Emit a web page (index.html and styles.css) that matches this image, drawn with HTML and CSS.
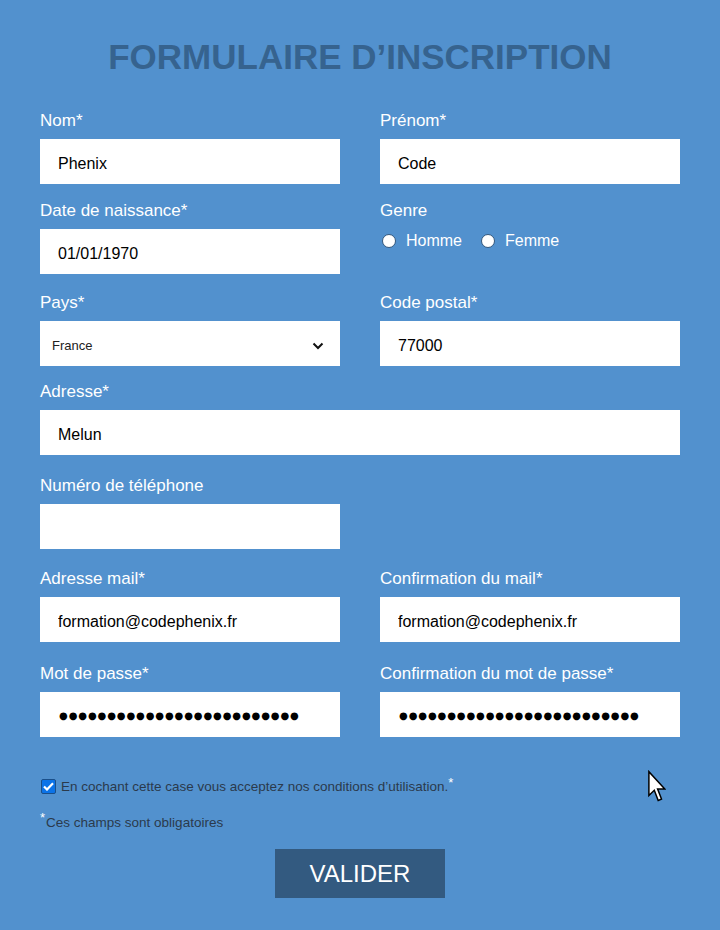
FILE: index.html
```html
<!DOCTYPE html>
<html lang="fr">
<head>
<meta charset="utf-8">
<title>Formulaire d'inscription</title>
<link rel="stylesheet" href="styles.css">
</head>
<body>
<main class="page">
  <h1 class="title">FORMULAIRE D’INSCRIPTION</h1>
  <form class="form">
    <div class="row">
      <div class="field"><label class="label">Nom*</label><input class="input" type="text" value="Phenix"></div>
      <div class="field"><label class="label">Prénom*</label><input class="input" type="text" value="Code"></div>
    </div>
    <div class="row row--2">
      <div class="field"><label class="label">Date de naissance*</label><input class="input" type="text" value="01/01/1970"></div>
      <div class="field">
        <span class="label">Genre</span>
        <div class="radios">
          <label class="radio"><span class="radio-dot"></span>Homme</label>
          <label class="radio"><span class="radio-dot"></span>Femme</label>
        </div>
      </div>
    </div>
    <div class="row row--3">
      <div class="field"><label class="label">Pays*</label>
        <div class="select"><span>France</span>
          <svg class="chev" width="12" height="8" viewBox="0 0 12 8"><path d="M1.5 1.5 L6 6 L10.5 1.5" fill="none" stroke="#111" stroke-width="2"/></svg>
        </div>
      </div>
      <div class="field"><label class="label">Code postal*</label><input class="input" type="text" value="77000"></div>
    </div>
    <div class="row row--4">
      <div class="field full"><label class="label">Adresse*</label><input class="input" type="text" value="Melun"></div>
    </div>
    <div class="row row--5">
      <div class="field"><label class="label">Numéro de téléphone</label><input class="input" type="text" value=""></div>
    </div>
    <div class="row row--6">
      <div class="field"><label class="label">Adresse mail*</label><input class="input" type="text" value="formation@codephenix.fr"></div>
      <div class="field"><label class="label">Confirmation du mail*</label><input class="input" type="text" value="formation@codephenix.fr"></div>
    </div>
    <div class="row row--7">
      <div class="field"><label class="label">Mot de passe*</label><input class="input pw" type="text" value="●●●●●●●●●●●●●●●●●●●●●●●●●"></div>
      <div class="field"><label class="label">Confirmation du mot de passe*</label><input class="input pw" type="text" value="●●●●●●●●●●●●●●●●●●●●●●●●●"></div>
    </div>

    <div class="terms">
      <span class="check"><svg width="11" height="9" viewBox="0 0 11 9"><path d="M1 4.5 L4 7.5 L10 1.2" fill="none" stroke="#fff" stroke-width="2.2"/></svg></span>
      <span>En cochant cette case vous acceptez nos conditions d’utilisation.</span><sup class="star">*</sup>
    </div>
    <p class="note"><sup class="star">*</sup>Ces champs sont obligatoires</p>
    <div class="actions"><button class="submit" type="button">VALIDER</button></div>
  </form>
  <svg class="cursor" width="18" height="33" viewBox="0 0 12 21"><path d="M0.6 0.6 L0.6 16.5 L4.2 13 L6.8 19.8 L9 18.9 L6.4 12.2 L11.2 12.2 Z" fill="#fff" stroke="#000" stroke-width="1"/></svg>
</main>
</body>
</html>
```

FILE: styles.css
```css
* { box-sizing: border-box; }
html, body { margin: 0; padding: 0; }
body {
  background: #5291ce;
  font-family: "Liberation Sans", Arial, sans-serif;
  width: 720px;
  height: 930px;
  overflow: hidden;
}
.page {
  position: relative;
  padding: 36px 40px 0;
}
.title {
  margin: 0 0 33px;
  text-align: center;
  font-size: 35px;
  line-height: 42px;
  font-weight: bold;
  color: #36638f;
}
.form { display: flex; flex-direction: column; }
.row {
  display: grid;
  grid-template-columns: 300px 300px;
  column-gap: 40px;
}
.row--2 { margin-top: 17px; }
.row--3 { margin-top: 19px; }
.row--4 { margin-top: 16px; }
.row--5 { margin-top: 21px; }
.row--6 { margin-top: 20px; }
.row--7 { margin-top: 22px; }
.field { display: flex; flex-direction: column; }
.field.full { grid-column: 1 / 3; }
.label {
  color: #fff;
  font-size: 17px;
  line-height: 20px;
  margin-bottom: 8px;
}
.input {
  height: 45px;
  border: 0;
  margin: 0;
  padding: 5px 18px 0;
  font-family: "Liberation Sans", Arial, sans-serif;
  font-size: 16px;
  color: #000;
  background: #fff;
  outline: none;
  width: 100%;
}
.input.pw {
  font-family: "DejaVu Sans", sans-serif;
  font-size: 10px;
  padding: 2px 18px 0 19px;
  letter-spacing: 0.9px;
}
.select {
  height: 45px;
  background: #fff;
  display: flex;
  align-items: center;
  justify-content: space-between;
  padding: 4px 16px 0 12px;
  font-size: 13px;
  color: #222;
}
.chev { display: block; }
.radios {
  display: flex;
  align-items: center;
  gap: 17px;
  margin-top: 3px;
}
.radio {
  display: flex;
  align-items: center;
  color: #fff;
  font-size: 16px;
  gap: 10px;
}
.radio-dot {
  width: 14px;
  height: 14px;
  border-radius: 50%;
  background: #fff;
  border: 1.5px solid #33577c;
  margin-left: 2px;
}
.terms {
  margin-top: 42px;
  display: flex;
  align-items: center;
  font-size: 13.5px;
  color: #2b3a4c;
}
.check {
  width: 15px;
  height: 15px;
  background: #0b73e8;
  border: 1px solid #1a4f8a;
  border-radius: 2px;
  display: flex;
  align-items: center;
  justify-content: center;
  margin: 0 5px 0 1px;
}
.star {
  color: #fff;
  font-size: 13px;
  line-height: 0;
  align-self: flex-start;
  margin-top: 4px;
}
.note {
  margin: 21px 0 0;
  font-size: 13.5px;
  color: #2b3a4c;
}
.note .star { vertical-align: 5px; margin: 0 1px 0 0; }
.actions { display: flex; justify-content: center; margin-top: 19px; }
.submit {
  width: 170px;
  height: 49px;
  border: 0;
  background: #335a80;
  color: #fff;
  font-family: "Liberation Sans", Arial, sans-serif;
  font-size: 24px;
}
.cursor { position: absolute; left: 648px; top: 770px; }
```
